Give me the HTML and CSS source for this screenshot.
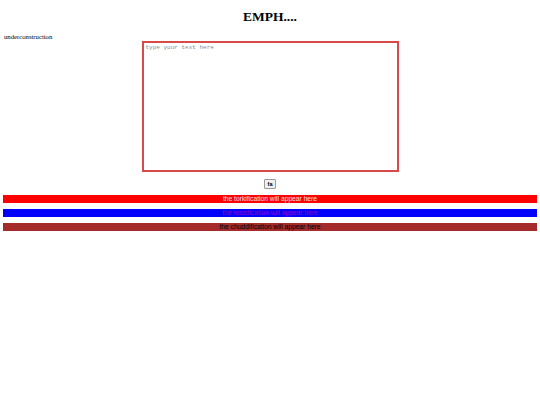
FILE: index.html
```html
<!DOCTYPE html>
<html>
<head>
<meta charset="utf-8">
<link rel="stylesheet" href="styles.css">
</head>
<body>
<h1 class="title">EMPH....</h1>
<div class="note">underconstruction</div>
<div class="editor">
  <textarea class="input" placeholder="type your text here"></textarea>
</div>
<div class="actions">
  <button class="btn">fa</button>
</div>
<div class="results">
  <div class="bar bar-tork">the torkification will appear here</div>
  <div class="bar bar-ross">the rossification will appear here</div>
  <div class="bar bar-chud">the chuddification will appear here</div>
</div>
</body>
</html>
```
FILE: styles.css
```css
html, body {
  background: #fff;
}
body {
  margin: 0;
  padding: 0 4px;
  font-family: "Liberation Serif", serif;
  font-size: 6.7px;
  color: #000;
}
.title {
  font-family: "Liberation Serif", serif;
  font-size: 13.5px;
  font-weight: bold;
  text-align: center;
  margin: 0;
  padding-top: 9px;
  margin-bottom: 8px;
  line-height: 16px;
}
.note {
  line-height: 8px;
}
.editor {
  display: flex;
  justify-content: center;
}
.input {
  box-sizing: border-box;
  width: 257px;
  height: 131px;
  border: 2px solid #d84a4a;
  margin: 0;
  padding: 1px 2px;
  font-family: "Liberation Mono", monospace;
  font-size: 6px;
  resize: none;
  outline: none;
}
.input::placeholder {
  color: #8a8a8a;
}
.actions {
  display: flex;
  justify-content: center;
  margin-top: 7px;
}
.btn {
  box-sizing: border-box;
  height: 10px;
  padding: 0 3px;
  font-family: "Liberation Sans", sans-serif;
  font-size: 5.5px;
  font-weight: bold;
  line-height: 8px;
  color: #000;
  background: #efefef;
  border: 1px solid #9a9a9a;
  border-radius: 1px;
}
.results {
  display: flex;
  flex-direction: column;
  gap: 6px;
  margin: 6px -1px 0;
}
.bar {
  height: 8px;
  line-height: 8px;
  text-align: center;
  font-family: "Liberation Sans", sans-serif;
  font-size: 6.7px;
}
.bar-tork {
  background: #ff0000;
  color: #ffe0e0;
}
.bar-ross {
  background: #0000ff;
  color: #9000c0;
}
.bar-chud {
  background: #a52a2a;
  color: #000;
}
```
